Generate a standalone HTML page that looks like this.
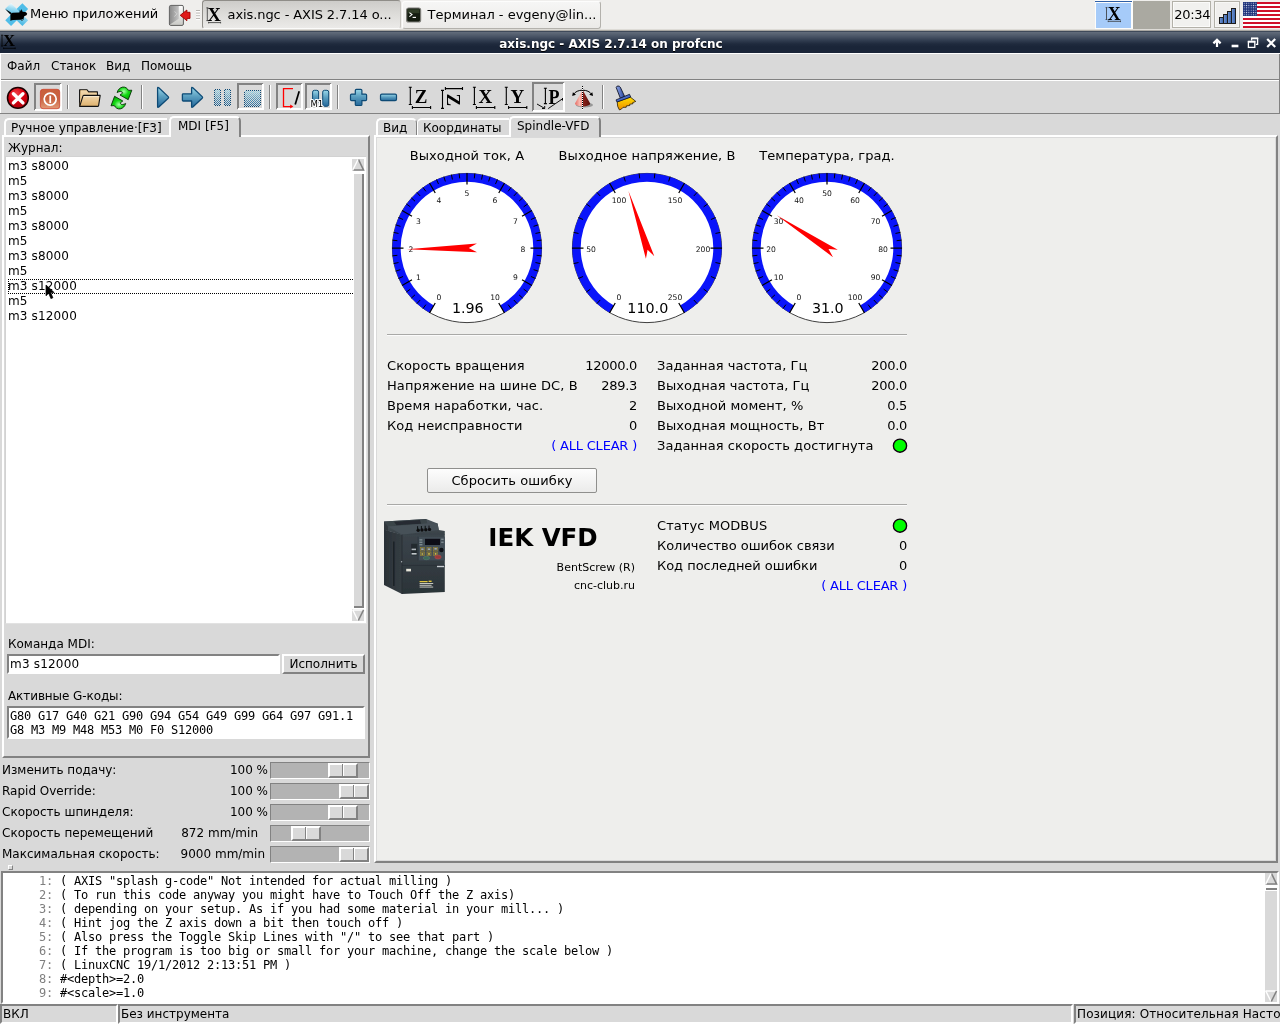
<!DOCTYPE html>
<html lang="ru"><head><meta charset="utf-8"><title>axis.ngc - AXIS 2.7.14 on profcnc</title>
<style>
html,body{margin:0;padding:0;}
body{width:1280px;height:1024px;overflow:hidden;position:relative;background:#d9d9d9;font-family:"DejaVu Sans","Liberation Sans",sans-serif;font-size:12px;color:#000;}
.a{position:absolute;white-space:pre;}
.t12{font-size:12px;line-height:14px;}
.t13{font-size:13px;line-height:16px;}
.mono{font-family:"DejaVu Sans Mono","Liberation Mono",monospace;font-size:12px;letter-spacing:-0.224px;line-height:14px;}
.raised{border-style:solid;border-color:#fff #828282 #828282 #fff;}
.sunken{border-style:solid;border-color:#828282 #fff #fff #828282;}
.r{text-align:right;}
svg{position:absolute;overflow:visible;}
/* xfce panel */
#panel{left:0;top:0;width:1280px;height:30px;background:#efeeec;}
#titlebar{left:0;top:31px;width:1280px;height:22px;background:linear-gradient(#2f3a4b 0px,#606a79 1.5px,#4c5768 5px,#333f52 9px,#1f2a3d 13px,#1a2538 16px,#1a2538 22px);}
#menubar{left:0;top:53px;width:1280px;height:26px;background:#d9d9d9;border-top:1px solid #fff;border-left:1px solid #fff;box-sizing:border-box;}
.ln{color:#7f7f7f;}

#root{position:absolute;left:0;top:0;width:1280px;height:1024px;will-change:transform;}
.num{letter-spacing:-0.3px;}
#rightnb .t13{letter-spacing:0.07px;}
#rightnb .t13.num{letter-spacing:-0.3px;}

</style></head>
<body>
<div id="root">
<div class="a" id="panel">
  <div class="a" style="left:0;top:29px;width:1280px;height:1px;background:#dddbd6"></div>
  <div class="a" style="left:0;top:30px;width:1280px;height:1px;background:#a9a7a2"></div>
  <div class="a t13" style="left:30px;top:6.2px;letter-spacing:-0.08px;">Меню приложений</div>
  <!-- task buttons -->
  <div class="a" style="left:202px;top:0px;width:199px;height:29px;border:1px solid;border-color:#8f8d88 #c9c7c2 #fbfbfa #8f8d88;border-radius:3px;background:linear-gradient(#cdccc9,#dcdbd8 45%,#ebeae8);box-sizing:border-box;"></div>
  <div class="a t13" style="left:227.5px;top:6.5px;letter-spacing:-0.09px;">axis.ngc - AXIS 2.7.14 o...</div>
  <div class="a" style="left:402px;top:1px;width:199px;height:28px;border:1px solid;border-color:#fdfdfc #b3b1ac #b3b1ac #fdfdfc;border-radius:3px;background:linear-gradient(#f6f6f5,#ebeae8);box-sizing:border-box;"></div>
  <div class="a t13" style="left:427.5px;top:6.5px;">Терминал - evgeny@lin...</div>
  <!-- pager -->
  <div class="a" style="left:1095px;top:0px;width:38px;height:29px;background:#fdfdfc;"></div>
  <div class="a" style="left:1095px;top:1px;width:37px;height:1px;background:#2f5fa6;"></div>
  <div class="a" style="left:1096px;top:3px;width:35px;height:25px;background:#a6cbf9;"></div>
  <div class="a" style="left:1133px;top:1px;width:37px;height:28px;background:#aaa9a1;"></div>
  <div class="a" style="left:1172px;top:1px;width:39px;height:27px;border:1px solid #b3b1a9;background:#f1f1ef;box-shadow:inset 0 0 0 1px #fbfbfa;box-sizing:border-box;"></div>
  <div class="a t13" style="left:1174.3px;top:6.5px;letter-spacing:-0.32px;">20:34</div>
  <div class="a" style="left:1214px;top:1px;width:26px;height:27px;border:1px solid #b3b1a9;background:#f0efed;box-shadow:inset 0 0 0 1px #f8f8f6;box-sizing:border-box;"></div>
<svg style="left:0;top:0" width="1280" height="31" viewBox="0 0 1280 31">
<defs>
  <linearGradient id="xg" x1="0" y1="0" x2="1" y2="1"><stop offset="0" stop-color="#f2fbfe"/><stop offset="0.35" stop-color="#9fdcf2"/><stop offset="1" stop-color="#3fb4e2"/></linearGradient>
  <linearGradient id="dg" x1="0" y1="0" x2="1" y2="0"><stop offset="0" stop-color="#8d8d8d"/><stop offset="1" stop-color="#c4c4c4"/></linearGradient>
  <linearGradient id="dg2" x1="0" y1="0" x2="0" y2="1"><stop offset="0" stop-color="#ffffff"/><stop offset="1" stop-color="#c9c9c5"/></linearGradient>
  <linearGradient id="nb" x1="0" y1="0" x2="1" y2="0"><stop offset="0" stop-color="#7498d6"/><stop offset="1" stop-color="#345ea6"/></linearGradient>
  <pattern id="stars" x="1243" y="2" width="2.33" height="2.33" patternUnits="userSpaceOnUse"><rect width="2.4" height="2.4" fill="#1b2f78"/><rect x="0.7" y="0.7" width="1" height="1" fill="#d0d6ea"/></pattern>
</defs>
<!-- xfce logo -->
<g transform="translate(16.7 14.6)">
  <rect x="-12.1" y="-4.1" width="24.2" height="8.2" transform="rotate(45)" fill="url(#xg)"/>
  <rect x="-12.1" y="-4.1" width="24.2" height="8.2" transform="rotate(-45)" fill="#4fbde8"/>
  <rect x="-12.1" y="-4.1" width="12.1" height="8.2" transform="rotate(45)" fill="url(#xg)"/>
</g>
<g fill="#000">
  <path d="M10.4 15.2Q10.2 13 12.6 12.8L19.4 12.4L19.9 9.6L20.9 11.4L21.5 9L22.8 11.9Q26.6 11.6 27.2 13.8Q27.2 15.6 24.2 16.2L23.6 18.4L23.8 19.8L22.6 19.2L20.6 19.8L13.4 19.9L11.6 20.2L10.6 21L10.4 19.4Z"/>
  <path d="M5.2 9.1L11.4 12.8L10.4 14.4Z"/>
  <path d="M21.6 19.4L23 20.8L21.2 20.4Z"/>
</g>
<!-- logout/door icon -->
<rect x="169.4" y="5.4" width="14" height="20" rx="1.4" fill="url(#dg2)" stroke="#5d5d5d" stroke-width="1"/>
<path d="M170 6H178.8V18.8L170 24.6Z" fill="url(#dg)"/>
<path d="M174.6 11.4L177 13.8L174.4 16.6" fill="none" stroke="#d8d8d8" stroke-width="0.8"/>
<path d="M180.2 15.3L186.9 10V12.3H190V18.4H186.9V20.7Z" fill="#e01818" stroke="#a00000" stroke-width="0.9" stroke-linejoin="round"/>
<!-- handle -->
<g><rect x="196" y="10" width="4" height="1" fill="#b5b3ae"/><rect x="196" y="12.7" width="4" height="1" fill="#b5b3ae"/><rect x="196" y="15.4" width="4" height="1" fill="#b5b3ae"/><rect x="196" y="18.1" width="4" height="1" fill="#b5b3ae"/>
<rect x="196" y="11" width="4" height="1" fill="#fff"/><rect x="196" y="13.7" width="4" height="1" fill="#fff"/><rect x="196" y="16.4" width="4" height="1" fill="#fff"/><rect x="196" y="19.1" width="4" height="1" fill="#fff"/></g>
<!-- X icon in task button -->
<g font-family="'Liberation Serif','DejaVu Serif',serif" font-weight="bold" fill="#000">
  <text x="207.6" y="20.9" font-size="18.5">X</text>
  <text x="1107.8" y="19.5" font-size="17.8">X</text>
</g>
<g stroke="#333" stroke-width="0.8" fill="none">
  <path d="M207.3 7.8V20.6M206.4 7.8H208.4M206.4 20.6H208.4"/>
  <path d="M208.6 22.6H220.6M208.6 21.8V23.4M220.6 21.8V23.4"/>
  <path d="M1106.5 7.6V19.5M1105.6 7.6H1107.4M1105.6 19.5H1107.4"/>
  <path d="M1108.2 21.3H1120.5M1108.2 20.5V22.1M1120.5 20.5V22.1"/>
</g>
<!-- terminal icon -->
<rect x="406.6" y="8" width="14" height="14" rx="2" fill="#141c10" stroke="#7d7d78" stroke-width="1.2"/>
<rect x="407.8" y="9.2" width="11.6" height="4" fill="#3a4a30" opacity="0.7"/>
<path d="M409.4 12.6L412 14.6L409.4 16.6" fill="none" stroke="#fff" stroke-width="1.1"/>
<path d="M412.6 17.4H416" stroke="#fff" stroke-width="1.1"/>
<!-- network bars -->
<g stroke="#1c1c1c" stroke-width="1" fill="url(#nb)">
  <rect x="1219.5" y="17.5" width="4" height="6"/>
  <rect x="1223.5" y="14.5" width="4" height="9"/>
  <rect x="1227.5" y="11.5" width="4" height="12"/>
  <rect x="1231.5" y="8.5" width="4" height="15"/>
</g>
<!-- US flag -->
<g>
  <rect x="1243" y="2" width="37" height="26" fill="#fff"/>
  <g fill="#d0102a">
    <rect x="1243" y="2" width="37" height="2"/><rect x="1243" y="6" width="37" height="2"/><rect x="1243" y="10" width="37" height="2"/><rect x="1243" y="14" width="37" height="2"/><rect x="1243" y="18" width="37" height="2"/><rect x="1243" y="22" width="37" height="2"/><rect x="1243" y="26" width="37" height="2"/>
  </g>
  <rect x="1243" y="2" width="14" height="14" fill="url(#stars)"/>
</g>
</svg>

</div>

<div class="a" id="titlebar">
  <div class="a" style="left:0;top:6px;width:1222px;text-align:center;color:#fff;font-weight:bold;font-size:12px;line-height:14px;text-shadow:0 1px 0 #000;">axis.ngc - AXIS 2.7.14 on profcnc</div>
  <svg style="left:0;top:-31px" width="1280" height="56" viewBox="0 0 1280 56">
    <g font-family="'Liberation Serif','DejaVu Serif',serif" font-weight="bold" fill="#000"><text x="3" y="46.1" font-size="16.8">X</text></g>
    <g stroke="#000" stroke-width="0.8" fill="none"><path d="M2 35.2V46.1M1.2 35.2H2.8M1.2 46.1H2.8"/><path d="M3.6 48.3H15.2M3.6 47.5V49.1M15.2 47.5V49.1"/></g>
    <g id="tbb" fill="none" stroke="#fff">
      <path d="M1217 47V40.6M1213.4 43.4L1217 39.8L1220.6 43.4" stroke-width="2.2" stroke-linejoin="miter"/>
      <path d="M1231.6 46H1238.4" stroke-width="2.6"/>
      <path d="M1251.6 40.4V38.6H1257.6V44.4H1255.8" stroke-width="1.3"/><path d="M1251 38.2H1258.2" stroke-width="1.6"/>
      <rect x="1248.4" y="41.8" width="6.4" height="5.6" stroke-width="1.3"/><path d="M1247.8 41.6H1255.4" stroke-width="1.8"/>
      <path d="M1267.2 39L1275.2 47M1275.2 39L1267.2 47" stroke-width="2.2"/>
    </g>
  </svg>
</div>

<div class="a" id="menubar">
  <div class="a t12" style="left:6px;top:5px;">Файл</div>
  <div class="a t12" style="left:50px;top:5px;">Станок</div>
  <div class="a t12" style="left:105px;top:5px;">Вид</div>
  <div class="a t12" style="left:140px;top:5px;">Помощь</div>
  <div class="a" id="mbr" style="left:1278px;top:0;width:1px;height:25px;background:#828282"></div>
</div>

<div class="a" id="toolbar" style="left:0;top:79px;width:1280px;height:35px;">
  <div class="a" style="left:0;top:0;width:1280px;height:1px;background:#828282"></div>
  <div class="a" style="left:0;top:1px;width:1280px;height:1px;background:#fff"></div>
  <div class="a" style="left:0;top:0px;width:1px;height:34px;background:#fff"></div>
  <div class="a" style="left:0;top:34px;width:1280px;height:1px;background:#828282"></div>
  <div class="a" style="left:1279px;top:1px;width:1px;height:34px;background:#828282"></div>
<svg style="left:0;top:-79px" width="1280" height="120" viewBox="0 0 1280 120">
<defs>
  <linearGradient id="gb" x1="0" y1="0" x2="0" y2="1"><stop offset="0" stop-color="#9ad8ea"/><stop offset="0.45" stop-color="#5b9fc0"/><stop offset="1" stop-color="#24679a"/></linearGradient>
  <radialGradient id="gr" cx="0.4" cy="0.3" r="0.75"><stop offset="0" stop-color="#f0444a"/><stop offset="0.5" stop-color="#d8000f"/><stop offset="1" stop-color="#a8000a"/></radialGradient>
  <linearGradient id="gp" x1="0" y1="0" x2="0" y2="1"><stop offset="0" stop-color="#c9603c"/><stop offset="0.5" stop-color="#c8623f"/><stop offset="1" stop-color="#e39a78"/></linearGradient>
  <linearGradient id="gf" x1="0" y1="0" x2="0" y2="1"><stop offset="0" stop-color="#f3d9ae"/><stop offset="1" stop-color="#ddb06c"/></linearGradient>
  <radialGradient id="gg" cx="0.45" cy="0.35" r="0.7"><stop offset="0" stop-color="#a8ffa8"/><stop offset="0.45" stop-color="#14d814"/><stop offset="1" stop-color="#00a400"/></radialGradient>
  <pattern id="stip" width="2" height="2" patternUnits="userSpaceOnUse"><rect x="0" y="0" width="1" height="1" fill="#fff"/><rect x="1" y="1" width="1" height="1" fill="#fff"/></pattern>
  <mask id="mstip"><rect x="200" y="80" width="80" height="40" fill="url(#stip)"/></mask>
  <linearGradient id="gcl" x1="0" y1="0" x2="1" y2="0"><stop offset="0" stop-color="#e86a62"/><stop offset="0.6" stop-color="#f7b9b0"/><stop offset="1" stop-color="#f08a80"/></linearGradient>
  <linearGradient id="gcr" x1="0" y1="0" x2="1" y2="0"><stop offset="0" stop-color="#8e241c"/><stop offset="1" stop-color="#5a0f0a"/></linearGradient>
  <linearGradient id="ghd" x1="0" y1="0" x2="1" y2="0"><stop offset="0" stop-color="#8fa4e4"/><stop offset="1" stop-color="#2746a0"/></linearGradient>
  <linearGradient id="gbr" x1="0" y1="0" x2="0" y2="1"><stop offset="0" stop-color="#ffe000"/><stop offset="1" stop-color="#ee8e00"/></linearGradient>
</defs>
<!-- sunken frames -->
<g fill="none" stroke-width="2">
  <path d="M35 110V84H61" stroke="#828282"/><path d="M35 110H61V84" stroke="#fff"/>
  <path d="M238 109V84H263" stroke="#828282"/><path d="M238 109H263V84" stroke="#fff"/>
  <path d="M277 109V84H302" stroke="#828282"/><path d="M277 109H302V84" stroke="#fff"/>
  <path d="M306 109V84H331" stroke="#828282"/><path d="M306 109H331V84" stroke="#fff"/>
  <path d="M533 111V83H564" stroke="#828282"/><path d="M533 111H564V83" stroke="#fff"/>
</g>
<!-- separators -->
<g>
  <rect x="67" y="85" width="1" height="24" fill="#828282"/><rect x="68" y="85" width="1" height="24" fill="#fff"/>
  <rect x="141" y="85" width="1" height="24" fill="#828282"/><rect x="142" y="85" width="1" height="24" fill="#fff"/>
  <rect x="269" y="85" width="1" height="24" fill="#828282"/><rect x="270" y="85" width="1" height="24" fill="#fff"/>
  <rect x="337" y="85" width="1" height="24" fill="#828282"/><rect x="338" y="85" width="1" height="24" fill="#fff"/>
  <rect x="602" y="85" width="1" height="24" fill="#828282"/><rect x="603" y="85" width="1" height="24" fill="#fff"/>
</g>
<!-- estop -->
<circle cx="17.9" cy="97.9" r="10.4" fill="url(#gr)" stroke="#1a0000" stroke-width="1.5"/>
<path d="M13.4 93.7L22.9 102.9M22.9 93.7L13.4 102.9" stroke="#fff" stroke-width="3.4" stroke-linecap="round"/>
<!-- power -->
<rect x="40.4" y="89.3" width="19.3" height="19.4" rx="2.6" fill="url(#gp)" stroke="#cf3a24" stroke-width="0.7"/>
<circle cx="50.2" cy="99.1" r="6" fill="none" stroke="#fff" stroke-width="1.7"/>
<rect x="49.4" y="95.6" width="1.7" height="7.4" fill="#fff"/>
<!-- folder -->
<path d="M79.6 106.3V89.7H87L88.6 91.9H97.4V95.5" fill="#e6c083" stroke="#111" stroke-width="1.1" stroke-linejoin="round"/>
<path d="M79.6 106.3L81 90.6H86.6L88.2 92.8H96.6V96" fill="url(#gf)"/>
<path d="M79.7 106.4L82.9 96.2Q83.2 95.4 84 95.4H100.2L98.6 105.6Q98.4 106.4 97.6 106.4Z" fill="url(#gf)" stroke="#111" stroke-width="1.1" stroke-linejoin="round"/>
<path d="M83.6 96.6H99" stroke="#f8ecd4" stroke-width="0.9"/>
<!-- refresh -->
<g id="rfa"><path d="M117.2 92.3C117.8 90 119.8 87.6 122.6 87.1C125.4 86.7 127.4 88.4 128.5 90.4L131.8 90.2L128.2 99.7L120 95L122.5 93.2C122.3 92 121.4 91.3 120.2 91.4C119 91.5 118 92.2 117.2 92.6Z" fill="url(#gg)" stroke="#063006" stroke-width="0.9" stroke-linejoin="round"/></g>
<use href="#rfa" transform="rotate(180 121.4 98)"/>
<!-- play -->
<path d="M157.6 88.2Q157.6 86.9 158.8 87.7L168.2 96.6Q169 97.4 168.2 98.2L158.8 107Q157.6 107.9 157.6 106.6Z" fill="url(#gb)" stroke="#0d4a75" stroke-width="1.3" stroke-linejoin="round"/>
<!-- step arrow -->
<path d="M183.2 93.8H191.6V88.2Q191.6 86.8 192.8 87.7L202.2 96.6Q203 97.4 202.2 98.2L192.8 107Q191.6 107.9 191.6 106.6V101H183.2Q182.4 101 182.4 100.2V94.6Q182.4 93.8 183.2 93.8Z" fill="url(#gb)" stroke="#0d4a75" stroke-width="1.3" stroke-linejoin="round"/>
<!-- pause (stippled) + stop (stippled) -->
<g mask="url(#mstip)">
  <g shape-rendering="crispEdges"><rect x="214.5" y="89.5" width="6" height="16" rx="1.5" fill="url(#gb)" stroke="#0d4a75" stroke-width="1"/>
  <rect x="224.5" y="89.5" width="6" height="16" rx="1.5" fill="url(#gb)" stroke="#0d4a75" stroke-width="1"/>
  <rect x="244.5" y="90.5" width="16" height="16" rx="1.5" fill="url(#gb)" stroke="#0d4a75" stroke-width="1"/></g>
</g>
<!-- skip lines -->
<path d="M293 88.6H283.5V106.6H291" fill="none" stroke="#ff0000" stroke-width="1.3"/>
<path d="M290.2 104.4L293.4 106.6L290.2 108.6Z" fill="#ff0000"/>
<path d="M299.2 91.3L295.2 104.6" stroke="#000" stroke-width="1.7"/>
<!-- optional pause M1 -->
<rect x="312.6" y="90.3" width="6" height="13" rx="1.8" fill="url(#gb)" stroke="#0d4a75" stroke-width="1"/>
<rect x="322.7" y="90.3" width="6" height="16" rx="1.8" fill="url(#gb)" stroke="#0d4a75" stroke-width="1"/>
<text x="310.4" y="107.4" font-size="8.6" stroke="#fff" stroke-width="2.2" stroke-linejoin="round" fill="#fff">M1</text>
<text x="310.4" y="107.4" font-size="8.6" fill="#000">M1</text>
<!-- plus / minus -->
<path d="M356.4 89.3H360.8Q361.9 89.3 361.9 90.4V94.1H365.5Q366.6 94.1 366.6 95.2V99.6Q366.6 100.7 365.5 100.7H361.9V104.4Q361.9 105.5 360.8 105.5H356.4Q355.3 105.5 355.3 104.4V100.7H351.6Q350.5 100.7 350.5 99.6V95.2Q350.5 94.1 351.6 94.1H355.3V90.4Q355.3 89.3 356.4 89.3Z" fill="url(#gb)" stroke="#0d4a75" stroke-width="1.2"/>
<rect x="380.5" y="94.1" width="16" height="6.6" rx="1.4" fill="url(#gb)" stroke="#0d4a75" stroke-width="1.2"/>
<!-- view Z -->
<g stroke="#000" stroke-width="1.1" fill="none">
  <path d="M410.3 87.3V104.5M408.8 87.3H411.8M408.8 104.5H411.8"/>
  <path d="M412.4 107.5H430.6M412.4 106V109M430.6 106V109"/>
  <path d="M442.5 90.4V108.4M441 90.4H444M441 108.4H444"/>
  <path d="M445.4 88.6H462.5M445.4 87.1V90.1M462.5 87.1V90.1"/>
  <path d="M474.4 87.3V104.5M472.9 87.3H475.9M472.9 104.5H475.9"/>
  <path d="M476.4 107.5H494.8M476.4 106V109M494.8 106V109"/>
  <path d="M506.3 87.3V104.5M504.8 87.3H507.8M504.8 104.5H507.8"/>
  <path d="M508.6 107.5H526.8M508.6 106V109M526.8 106V109"/>
  <path d="M545.4 88.2V103.6M543.9 88.2H546.9M543.9 103.6H546.9"/>
  <path d="M537 104L544.6 108.4M542 108.5H544.7V106" stroke-width="0.95"/>
  <path d="M548.2 108.6L562.5 98.8M562.5 98V100.6" stroke-width="0.95"/>
</g>
<g font-family="'Liberation Serif','DejaVu Serif',serif" font-weight="bold" font-size="19" fill="#000">
  <text x="414.8" y="102.9">Z</text>
  <text x="0" y="0" transform="translate(447 93.4) rotate(90)" font-size="19" textLength="12.6">Z</text>
  <text x="478.6" y="102.9" font-size="19">X</text>
  <text x="510.5" y="102.9" font-size="19">Y</text>
  <text transform="translate(548.4 103.6) scale(0.86 1)" font-size="21">P</text>
</g>
<!-- cone rotate -->
<path d="M573.4 94.4Q576.4 90.2 582.6 90.2Q588.8 90.2 591.8 94.4" fill="none" stroke="#000" stroke-width="1"/>
<path d="M572.2 96L572.9 92.2L576 94.8Z M593 96L592.3 92.2L589.2 94.8Z" fill="#000"/>
<ellipse cx="584.4" cy="105" rx="8.6" ry="2.4" fill="#000" opacity="0.3"/>
<path d="M582.6 90L575 103.4A7.6 3 0 0 0 582.6 106.4Z" fill="url(#gcl)"/>
<path d="M582.6 90L590.2 103.4A7.6 3 0 0 1 582.6 106.4Z" fill="url(#gcr)"/>
<path d="M582.5 86V110" stroke="#000" stroke-width="1"/>
<path d="M582.5 87V110" stroke="#fff" stroke-width="1" stroke-dasharray="1 1"/>
<!-- broom -->
<path d="M616.2 87.5Q616.5 86 618 86Q619.6 86 620.3 87.2L624.6 96.4L620.5 98.6Z" fill="url(#ghd)" stroke="#0c1226" stroke-width="0.9" stroke-linejoin="round"/>
<path d="M617.2 101.9L630.2 97L635.8 101.4L632.6 102.7L633 103.7L629.6 104.3L629.8 105.5L626.4 105.9L626.2 107.3L623 107.3L621.4 109.1L619.4 109.9L617.7 106.4Z" fill="url(#gbr)" stroke="#2a1c00" stroke-width="0.8" stroke-linejoin="round"/>
<path d="M616 99.9L629.5 94.3L630.7 97.1L617 102Z" fill="#4a6cc6" stroke="#0c1226" stroke-width="0.8" stroke-linejoin="round"/>
</svg>

</div>

<!-- LEFT NOTEBOOK -->
<div class="a" id="leftnb" style="left:0;top:0;">
  <!-- inactive tab -->
  <div class="a" style="left:4px;top:118px;width:163px;height:18px;border-top:2px solid #fff;border-left:2px solid #fff;border-top-left-radius:5px;box-sizing:border-box;"></div>
  <div class="a t12" style="left:11px;top:121px;">Ручное управление·[F3]</div>
  <!-- panel frame -->
  <div class="a" style="left:2px;top:135px;width:368px;height:623px;box-sizing:border-box;border:2px solid;border-color:#fff #828282 #828282 #fff;"></div>
  <!-- active tab -->
  <div class="a" style="left:169px;top:116px;width:72px;height:21px;background:#d9d9d9;border-top:2px solid #fff;border-left:2px solid #fff;border-right:2px solid #828282;border-radius:5px 5px 0 0;box-sizing:border-box;"></div>
  <div class="a t12" style="left:178px;top:119px;">MDI [F5]</div>

  <div class="a t12" style="left:8px;top:141px;">Журнал:</div>
  <!-- listbox -->
  <div class="a" style="left:5px;top:156px;width:362px;height:468px;background:#fff;box-sizing:border-box;border:1px solid;border-color:#d2d2d2 #e2e2e2 #e2e2e2 #d2d2d2;"></div>
  <div class="a t12" id="journal" style="left:8px;top:159px;line-height:15px;letter-spacing:0.15px;">m3 s8000
m5
m3 s8000
m5
m3 s8000
m5
m3 s8000
m5
m3 s12000
m5
m3 s12000</div>
  <svg style="left:8px;top:279px" width="345" height="15" viewBox="0 0 345 15"><path d="M0 0.5H345M0 14.5H345" stroke="#000" stroke-width="1" stroke-dasharray="1 1"/><path d="M0.5 0V15" stroke="#000" stroke-width="1" stroke-dasharray="1 1"/></svg>
  <svg style="left:44px;top:283px" width="14" height="18" viewBox="44 283 14 18"><path d="M46 285V295.8L48.7 293.2L50.9 298.6L52.9 297.8L50.7 292.6H54.2Z" fill="#000" stroke="#000" stroke-width="0.7" stroke-linejoin="round"/></svg>
  <!-- scrollbar -->
  <div class="a" style="left:354px;top:174px;width:8px;height:432px;background:#d9d9d9;border-right:2px solid #828282;border-bottom:2px solid #828282;"></div>
  <svg style="left:352px;top:159px" width="12" height="12" viewBox="0 0 12 12"><rect width="12" height="12" fill="#d9d9d9"/><path d="M6.5 0.5 L11.5 11 L0.5 11" fill="none" stroke="#828282" stroke-width="1.6"/><path d="M6 0.5 L0.5 11.5" stroke="#fff" stroke-width="1.4"/></svg>
  <svg style="left:352px;top:609px" width="12" height="12" viewBox="0 0 12 12"><rect width="12" height="12" fill="#d9d9d9"/><path d="M0.5 1 L11.5 1" stroke="#fff" stroke-width="1.4"/><path d="M0.8 1 L6 11.5" stroke="#fff" stroke-width="1.4"/><path d="M11.5 1 L6.3 11.5" stroke="#828282" stroke-width="1.6"/></svg>

  <div class="a t12" style="left:8px;top:637px;">Команда MDI:</div>
  <div class="a" style="left:7px;top:654px;width:273px;height:20px;background:#fff;box-sizing:border-box;border:2px solid;border-color:#828282 #fff #fff #828282;"></div>
  <div class="a t12" style="left:10px;top:657px;letter-spacing:0.2px;">m3 s12000</div>
  <div class="a" style="left:282px;top:654px;width:83px;height:20px;box-sizing:border-box;border:2px solid;border-color:#fff #828282 #828282 #fff;"></div>
  <div class="a t12" style="left:282px;top:657px;width:83px;text-align:center;">Исполнить</div>
  <div class="a t12" style="left:8px;top:689px;letter-spacing:-0.09px;">Активные G-коды:</div>
  <div class="a" style="left:7px;top:706px;width:358px;height:33px;background:#fff;box-sizing:border-box;border:2px solid;border-color:#828282 #fff #fff #828282;"></div>
  <div class="a mono" style="left:10px;top:709px;">G80 G17 G40 G21 G90 G94 G54 G49 G99 G64 G97 G91.1
G8 M3 M9 M48 M53 M0 F0 S12000</div>

  <!-- sliders -->
  <div class="a t12" style="left:2px;top:763px;">Изменить подачу:</div>
  <div class="a t12 r" style="left:200px;top:763px;width:68px;">100 %</div>
  <div class="a t12" style="left:2px;top:784px;">Rapid Override:</div>
  <div class="a t12 r" style="left:200px;top:784px;width:68px;">100 %</div>
  <div class="a t12" style="left:2px;top:805px;">Скорость шпинделя:</div>
  <div class="a t12 r" style="left:200px;top:805px;width:68px;">100 %</div>
  <div class="a t12" style="left:2px;top:826px;">Скорость перемещений</div>
  <div class="a t12 r" style="left:160px;top:826px;width:98px;">872 mm/min</div>
  <div class="a t12" style="left:2px;top:847px;">Максимальная скорость:</div>
  <div class="a t12 r" style="left:160px;top:847px;width:105px;">9000 mm/min</div>
<div class="a" style="left:270px;top:762px;width:100px;height:17px;background:#b3b3b3;box-sizing:border-box;border:1px solid;border-color:#828282 #fff #fff #828282;"></div>
<div class="a" style="left:328px;top:763px;width:30px;height:15px;background:#d9d9d9;box-sizing:border-box;border:2px solid;border-color:#fff #828282 #828282 #fff;"></div>
<div class="a" style="left:342px;top:764px;width:1px;height:12px;background:#828282;"></div>
<div class="a" style="left:343px;top:764px;width:1px;height:12px;background:#fff;"></div>
<div class="a" style="left:270px;top:783px;width:100px;height:17px;background:#b3b3b3;box-sizing:border-box;border:1px solid;border-color:#828282 #fff #fff #828282;"></div>
<div class="a" style="left:339px;top:784px;width:30px;height:15px;background:#d9d9d9;box-sizing:border-box;border:2px solid;border-color:#fff #828282 #828282 #fff;"></div>
<div class="a" style="left:353px;top:785px;width:1px;height:12px;background:#828282;"></div>
<div class="a" style="left:354px;top:785px;width:1px;height:12px;background:#fff;"></div>
<div class="a" style="left:270px;top:804px;width:100px;height:17px;background:#b3b3b3;box-sizing:border-box;border:1px solid;border-color:#828282 #fff #fff #828282;"></div>
<div class="a" style="left:328px;top:805px;width:30px;height:15px;background:#d9d9d9;box-sizing:border-box;border:2px solid;border-color:#fff #828282 #828282 #fff;"></div>
<div class="a" style="left:342px;top:806px;width:1px;height:12px;background:#828282;"></div>
<div class="a" style="left:343px;top:806px;width:1px;height:12px;background:#fff;"></div>
<div class="a" style="left:270px;top:825px;width:100px;height:17px;background:#b3b3b3;box-sizing:border-box;border:1px solid;border-color:#828282 #fff #fff #828282;"></div>
<div class="a" style="left:291px;top:826px;width:30px;height:15px;background:#d9d9d9;box-sizing:border-box;border:2px solid;border-color:#fff #828282 #828282 #fff;"></div>
<div class="a" style="left:305px;top:827px;width:1px;height:12px;background:#828282;"></div>
<div class="a" style="left:306px;top:827px;width:1px;height:12px;background:#fff;"></div>
<div class="a" style="left:270px;top:846px;width:100px;height:17px;background:#b3b3b3;box-sizing:border-box;border:1px solid;border-color:#828282 #fff #fff #828282;"></div>
<div class="a" style="left:339px;top:847px;width:30px;height:15px;background:#d9d9d9;box-sizing:border-box;border:2px solid;border-color:#fff #828282 #828282 #fff;"></div>
<div class="a" style="left:353px;top:848px;width:1px;height:12px;background:#828282;"></div>
<div class="a" style="left:354px;top:848px;width:1px;height:12px;background:#fff;"></div>
</div>

<!-- RIGHT NOTEBOOK -->
<div class="a" id="rightnb" style="left:0;top:0;">
  <div class="a" style="left:376px;top:118px;width:41px;height:18px;border-top:2px solid #fff;border-left:2px solid #fff;border-right:1px solid #828282;border-top-left-radius:5px;border-top-right-radius:5px;box-sizing:border-box;"></div>
  <div class="a t12" style="left:383px;top:121px;">Вид</div>
  <div class="a" style="left:417px;top:118px;width:92px;height:18px;border-top:2px solid #fff;border-left:1px solid #fff;border-top-left-radius:5px;box-sizing:border-box;"></div>
  <div class="a t12" style="left:423px;top:121px;">Координаты</div>
  <div class="a" style="left:374px;top:135px;width:904px;height:728px;background:#eeeeec;box-sizing:border-box;border:2px solid;border-color:#fff #828282 #828282 #fff;box-shadow:inset 0 0 0 1px #dadada;"></div>
  <div class="a" style="left:509px;top:116px;width:92px;height:21px;background:#d9d9d9;border-top:2px solid #fff;border-left:2px solid #fff;border-right:2px solid #828282;border-radius:5px 5px 0 0;box-sizing:border-box;"></div>
  <div class="a t12" style="left:517px;top:119px;">Spindle-VFD</div>

  <div class="a t13" style="left:386px;top:148px;width:162px;text-align:center;">Выходной ток, А</div>
  <div class="a t13" style="left:547px;top:148px;width:200px;text-align:center;">Выходное напряжение, В</div>
  <div class="a t13" style="left:746px;top:148px;width:162px;text-align:center;">Температура, град.</div>
<svg style="left:0;top:0" width="1280" height="1024" viewBox="0 0 1280 1024">
<circle cx="467" cy="248" r="74.6" fill="#fff" stroke="#2a2a2a" stroke-width="0.9"/>
<path d="M431.75 309.05 A70.5 70.5 0 1 1 502.25 309.05" fill="none" stroke="#0a14fa" stroke-width="8.4"/>
<path d="M422.92 308.68L425.86 304.63M416.82 303.74L420.16 300.02M411.26 298.18L414.98 294.84M406.32 292.08L410.37 289.14M398.48 278.51L403.05 276.47M395.67 271.18L400.43 269.63M393.64 263.59L398.53 262.55M392.41 255.84L397.38 255.32M392.41 240.16L397.38 240.68M393.64 232.41L398.53 233.45M395.67 224.82L400.43 226.37M398.48 217.49L403.05 219.53M406.32 203.92L410.37 206.86M411.26 197.82L414.98 201.16M416.82 192.26L420.16 195.98M422.92 187.32L425.86 191.37M436.49 179.48L438.53 184.05M443.82 176.67L445.37 181.43M451.41 174.64L452.45 179.53M459.16 173.41L459.68 178.38M474.84 173.41L474.32 178.38M482.59 174.64L481.55 179.53M490.18 176.67L488.63 181.43M497.51 179.48L495.47 184.05M511.08 187.32L508.14 191.37M517.18 192.26L513.84 195.98M522.74 197.82L519.02 201.16M527.68 203.92L523.63 206.86M535.52 217.49L530.95 219.53M538.33 224.82L533.57 226.37M540.36 232.41L535.47 233.45M541.59 240.16L536.62 240.68M541.59 255.84L536.62 255.32M540.36 263.59L535.47 262.55M538.33 271.18L533.57 269.63M535.52 278.51L530.95 276.47M527.68 292.08L523.63 289.14M522.74 298.18L519.02 294.84M517.18 303.74L513.84 300.02M511.08 308.68L508.14 304.63" stroke="#000" stroke-width="1" fill="none"/>
<path d="M429.50 312.95L435.25 302.99M402.05 285.50L412.01 279.75M392.00 248.00L403.50 248.00M402.05 210.50L412.01 216.25M429.50 183.05L435.25 193.01M467.00 173.00L467.00 184.50M504.50 183.05L498.75 193.01M531.95 210.50L521.99 216.25M542.00 248.00L530.50 248.00M531.95 285.50L521.99 279.75M504.50 312.95L498.75 302.99" stroke="#000" stroke-width="1.25" fill="none"/>
<text x="439.0" y="300.4" text-anchor="middle" font-size="7.6" fill="#111">0</text>
<text x="418.5" y="279.9" text-anchor="middle" font-size="7.6" fill="#111">1</text>
<text x="411.0" y="251.9" text-anchor="middle" font-size="7.6" fill="#111">2</text>
<text x="418.5" y="223.9" text-anchor="middle" font-size="7.6" fill="#111">3</text>
<text x="439.0" y="203.4" text-anchor="middle" font-size="7.6" fill="#111">4</text>
<text x="467.0" y="195.9" text-anchor="middle" font-size="7.6" fill="#111">5</text>
<text x="495.0" y="203.4" text-anchor="middle" font-size="7.6" fill="#111">6</text>
<text x="515.5" y="223.9" text-anchor="middle" font-size="7.6" fill="#111">7</text>
<text x="523.0" y="251.9" text-anchor="middle" font-size="7.6" fill="#111">8</text>
<text x="515.5" y="279.9" text-anchor="middle" font-size="7.6" fill="#111">9</text>
<text x="495.0" y="300.4" text-anchor="middle" font-size="7.6" fill="#111">10</text>
<path d="M407.01 249.26L476.91 243.39L468.80 247.96L477.09 252.19Z" fill="#ff0000"/>
<text x="467.8" y="313.2" text-anchor="middle" font-size="14.3" fill="#000">1.96</text>
</svg>
<svg style="left:0;top:0" width="1280" height="1024" viewBox="0 0 1280 1024">
<circle cx="647" cy="248" r="74.6" fill="#fff" stroke="#2a2a2a" stroke-width="0.9"/>
<path d="M611.75 309.05 A70.5 70.5 0 1 1 682.25 309.05" fill="none" stroke="#0a14fa" stroke-width="8.4"/>
<path d="M596.82 303.74L600.16 300.02M586.32 292.08L590.37 289.14M578.48 278.51L583.05 276.47M573.64 263.59L578.53 262.55M573.64 232.41L578.53 233.45M578.48 217.49L583.05 219.53M586.32 203.92L590.37 206.86M596.82 192.26L600.16 195.98M623.82 176.67L625.37 181.43M639.16 173.41L639.68 178.38M654.84 173.41L654.32 178.38M670.18 176.67L668.63 181.43M697.18 192.26L693.84 195.98M707.68 203.92L703.63 206.86M715.52 217.49L710.95 219.53M720.36 232.41L715.47 233.45M720.36 263.59L715.47 262.55M715.52 278.51L710.95 276.47M707.68 292.08L703.63 289.14M697.18 303.74L693.84 300.02" stroke="#000" stroke-width="1" fill="none"/>
<path d="M609.50 312.95L615.25 302.99M572.00 248.00L583.50 248.00M609.50 183.05L615.25 193.01M684.50 183.05L678.75 193.01M722.00 248.00L710.50 248.00M684.50 312.95L678.75 302.99" stroke="#000" stroke-width="1.25" fill="none"/>
<text x="619.0" y="300.4" text-anchor="middle" font-size="7.6" fill="#111">0</text>
<text x="591.0" y="251.9" text-anchor="middle" font-size="7.6" fill="#111">50</text>
<text x="619.0" y="203.4" text-anchor="middle" font-size="7.6" fill="#111">100</text>
<text x="675.0" y="203.4" text-anchor="middle" font-size="7.6" fill="#111">150</text>
<text x="703.0" y="251.9" text-anchor="middle" font-size="7.6" fill="#111">200</text>
<text x="675.0" y="300.4" text-anchor="middle" font-size="7.6" fill="#111">250</text>
<path d="M628.46 190.94L654.27 256.15L647.56 249.71L645.91 258.87Z" fill="#ff0000"/>
<text x="647.8" y="313.2" text-anchor="middle" font-size="14.3" fill="#000">110.0</text>
</svg>
<svg style="left:0;top:0" width="1280" height="1024" viewBox="0 0 1280 1024">
<circle cx="827" cy="248" r="74.6" fill="#fff" stroke="#2a2a2a" stroke-width="0.9"/>
<path d="M791.75 309.05 A70.5 70.5 0 1 1 862.25 309.05" fill="none" stroke="#0a14fa" stroke-width="8.4"/>
<path d="M782.92 308.68L785.86 304.63M776.82 303.74L780.16 300.02M771.26 298.18L774.98 294.84M766.32 292.08L770.37 289.14M758.48 278.51L763.05 276.47M755.67 271.18L760.43 269.63M753.64 263.59L758.53 262.55M752.41 255.84L757.38 255.32M752.41 240.16L757.38 240.68M753.64 232.41L758.53 233.45M755.67 224.82L760.43 226.37M758.48 217.49L763.05 219.53M766.32 203.92L770.37 206.86M771.26 197.82L774.98 201.16M776.82 192.26L780.16 195.98M782.92 187.32L785.86 191.37M796.49 179.48L798.53 184.05M803.82 176.67L805.37 181.43M811.41 174.64L812.45 179.53M819.16 173.41L819.68 178.38M834.84 173.41L834.32 178.38M842.59 174.64L841.55 179.53M850.18 176.67L848.63 181.43M857.51 179.48L855.47 184.05M871.08 187.32L868.14 191.37M877.18 192.26L873.84 195.98M882.74 197.82L879.02 201.16M887.68 203.92L883.63 206.86M895.52 217.49L890.95 219.53M898.33 224.82L893.57 226.37M900.36 232.41L895.47 233.45M901.59 240.16L896.62 240.68M901.59 255.84L896.62 255.32M900.36 263.59L895.47 262.55M898.33 271.18L893.57 269.63M895.52 278.51L890.95 276.47M887.68 292.08L883.63 289.14M882.74 298.18L879.02 294.84M877.18 303.74L873.84 300.02M871.08 308.68L868.14 304.63" stroke="#000" stroke-width="1" fill="none"/>
<path d="M789.50 312.95L795.25 302.99M762.05 285.50L772.01 279.75M752.00 248.00L763.50 248.00M762.05 210.50L772.01 216.25M789.50 183.05L795.25 193.01M827.00 173.00L827.00 184.50M864.50 183.05L858.75 193.01M891.95 210.50L881.99 216.25M902.00 248.00L890.50 248.00M891.95 285.50L881.99 279.75M864.50 312.95L858.75 302.99" stroke="#000" stroke-width="1.25" fill="none"/>
<text x="799.0" y="300.4" text-anchor="middle" font-size="7.6" fill="#111">0</text>
<text x="778.5" y="279.9" text-anchor="middle" font-size="7.6" fill="#111">10</text>
<text x="771.0" y="251.9" text-anchor="middle" font-size="7.6" fill="#111">20</text>
<text x="778.5" y="223.9" text-anchor="middle" font-size="7.6" fill="#111">30</text>
<text x="799.0" y="203.4" text-anchor="middle" font-size="7.6" fill="#111">40</text>
<text x="827.0" y="195.9" text-anchor="middle" font-size="7.6" fill="#111">50</text>
<text x="855.0" y="203.4" text-anchor="middle" font-size="7.6" fill="#111">60</text>
<text x="875.5" y="223.9" text-anchor="middle" font-size="7.6" fill="#111">70</text>
<text x="883.0" y="251.9" text-anchor="middle" font-size="7.6" fill="#111">80</text>
<text x="875.5" y="279.9" text-anchor="middle" font-size="7.6" fill="#111">90</text>
<text x="855.0" y="300.4" text-anchor="middle" font-size="7.6" fill="#111">100</text>
<path d="M776.68 215.32L837.78 249.76L828.51 248.98L832.99 257.14Z" fill="#ff0000"/>
<text x="827.8" y="313.2" text-anchor="middle" font-size="14.3" fill="#000">31.0</text>
</svg>
  <div class="a" style="left:387px;top:334px;width:520px;height:1px;background:#a9a9a7"></div>
  <div class="a" style="left:387px;top:335px;width:520px;height:1px;background:#fbfbfb"></div>

  <div class="a t13" style="left:387px;top:358px;">Скорость вращения</div>
  <div class="a t13 r num" style="left:537px;top:358px;width:100px;">12000.0</div>
  <div class="a t13" style="left:387px;top:378px;">Напряжение на шине DC, В</div>
  <div class="a t13 r num" style="left:537px;top:378px;width:100px;">289.3</div>
  <div class="a t13" style="left:387px;top:398px;">Время наработки, час.</div>
  <div class="a t13 r num" style="left:537px;top:398px;width:100px;">2</div>
  <div class="a t13" style="left:387px;top:418px;">Код неисправности</div>
  <div class="a t13 r num" style="left:537px;top:418px;width:100px;">0</div>
  <div class="a t13 r" style="left:497px;top:438px;width:140px;color:#0000ff;letter-spacing:-0.2px;">( ALL CLEAR )</div>

  <div class="a t13" style="left:657px;top:358px;">Заданная частота, Гц</div>
  <div class="a t13 r num" style="left:807px;top:358px;width:100px;">200.0</div>
  <div class="a t13" style="left:657px;top:378px;">Выходная частота, Гц</div>
  <div class="a t13 r num" style="left:807px;top:378px;width:100px;">200.0</div>
  <div class="a t13" style="left:657px;top:398px;">Выходной момент, %</div>
  <div class="a t13 r num" style="left:807px;top:398px;width:100px;">0.5</div>
  <div class="a t13" style="left:657px;top:418px;">Выходная мощность, Вт</div>
  <div class="a t13 r num" style="left:807px;top:418px;width:100px;">0.0</div>
  <div class="a t13" style="left:657px;top:438px;">Заданная скорость достигнута</div>
  <svg style="left:890px;top:436px" width="20" height="20" viewBox="890 436 20 20"><circle cx="900" cy="445.7" r="6.6" fill="#00ff00" stroke="#100010" stroke-width="1.4"/></svg>

  <div class="a" style="left:427px;top:468px;width:170px;height:25px;border:1px solid #8f8f8d;border-radius:2px;background:linear-gradient(#fdfdfd,#ebebea);box-sizing:border-box;"></div>
  <div class="a t13" style="left:427px;top:472.7px;width:170px;text-align:center;">Сбросить ошибку</div>

  <div class="a" style="left:387px;top:504px;width:520px;height:1px;background:#a9a9a7"></div>
  <div class="a" style="left:387px;top:505px;width:520px;height:1px;background:#fbfbfb"></div>
<svg style="left:0;top:0" width="1280" height="1024" viewBox="0 0 1280 1024">
<defs>
  <linearGradient id="vf" x1="0" y1="0" x2="0" y2="1"><stop offset="0" stop-color="#3b444b"/><stop offset="1" stop-color="#2b3338"/></linearGradient>
  <linearGradient id="vs" x1="0" y1="0" x2="1" y2="0"><stop offset="0" stop-color="#2b3237"/><stop offset="1" stop-color="#353d43"/></linearGradient>
  <linearGradient id="vt" x1="0" y1="0" x2="0" y2="1"><stop offset="0" stop-color="#4a545b"/><stop offset="1" stop-color="#384147"/></linearGradient>
  <filter id="vblur" x="-5%" y="-5%" width="110%" height="110%"><feGaussianBlur stdDeviation="0.35"/></filter>
</defs>
<g filter="url(#vblur)">
  <!-- left side -->
  <path d="M384 529.6L402 534.6V594L384 585Z" fill="url(#vs)"/>
  <path d="M393.8 541.5V586" stroke="#1e2428" stroke-width="1.6"/>
  <path d="M389.4 538V583.6" stroke="#30383d" stroke-width="1"/>
  <!-- top cover -->
  <path d="M384 521.6L426.2 519L437.6 523.6L438.8 530L444.8 531V535L402 535L384 529.8Z" fill="url(#vt)"/>
  <path d="M384 521.6L426.2 519L427.4 523.4L388 526.4Z" fill="#3b444a"/>
  <path d="M394 521.7L420 520.1L421 523.7L396.4 525.2Z" fill="#262c31"/>
  <path d="M388 526.4L427.4 523.4L437.6 523.6L438.8 530L402 534.8Z" fill="#475158"/>
  <path d="M384 521.6V529.8L388 531V526.4Z" fill="#30383d"/>
  <!-- knobs -->
  <g fill="#0c0e10"><circle cx="418.2" cy="530.2" r="1.7"/><circle cx="422" cy="530" r="1.7"/><circle cx="425.8" cy="529.7" r="1.7"/><circle cx="429.5" cy="529.4" r="1.7"/></g>
  <g stroke="#0c0e10" stroke-width="1"><path d="M417.6 526.2V529M421.4 526V529M425.2 525.8V528.6M429 525.6V528.4"/></g>
  <!-- front -->
  <path d="M402 534.6H444.8V592L402 594Z" fill="url(#vf)"/>
  <path d="M402 565.4H444.8" stroke="#283035" stroke-width="0.9"/>
  <path d="M402 534.6V594" stroke="#262d32" stroke-width="0.9"/>
  <!-- control panel -->
  <rect x="418.2" y="536.8" width="26.6" height="23.6" fill="#434e57"/>
  <path d="M418.2 536.8V560.4" stroke="#2a3238" stroke-width="0.8"/>
  <rect x="425" y="538.8" width="15" height="6.2" fill="#0e1113"/>
  <g fill="#7d8a90"><rect x="419.4" y="539.2" width="3" height="1.4"/><rect x="419.4" y="541.6" width="3" height="1.4"/><rect x="419.4" y="544" width="3" height="1.4"/><rect x="441.2" y="538.6" width="2.4" height="1.4"/><rect x="441.2" y="541.6" width="2.4" height="1.4"/></g>
  <g fill="#4d555b" stroke="#93802f" stroke-width="0.7">
    <rect x="420.4" y="547.6" width="4" height="3.4"/><rect x="427" y="547.6" width="4" height="3.4"/><rect x="433.6" y="547.6" width="4" height="3.4"/>
    <rect x="420.4" y="552.2" width="4" height="3.4"/><rect x="427" y="552.2" width="4" height="3.4"/><rect x="433.6" y="552.2" width="4" height="3.4"/>
  </g>
  <g fill="#cdb840"><rect x="421.6" y="553.2" width="1.6" height="1.6"/><rect x="428.2" y="553" width="1.6" height="1.8"/><rect x="434.8" y="553" width="1.6" height="1.8"/></g>
  <g fill="#d8dde0"><rect x="421.2" y="548.6" width="2.4" height="1"/><rect x="427.8" y="548.6" width="2.4" height="1"/><rect x="434.4" y="548.4" width="2.4" height="1"/></g>
  <circle cx="441.4" cy="550" r="2.2" fill="#0e1012"/>
  <ellipse cx="426.4" cy="558" rx="3.2" ry="1.7" fill="#3e6a58" stroke="#5a7f70" stroke-width="0.5"/>
  <ellipse cx="438" cy="557" rx="3.2" ry="1.9" fill="#9a3a3a" stroke="#b45050" stroke-width="0.5"/>
  <!-- small connector block -->
  <rect x="411.2" y="543.8" width="6" height="11.6" fill="#22292d"/>
  <rect x="411.6" y="548.6" width="4.4" height="1.6" fill="#aeb6ba"/><rect x="411.6" y="553" width="5" height="1.6" fill="#c4cacd"/>
  <!-- labels -->
  <rect x="406.2" y="568.8" width="4.8" height="2.6" fill="#e8e6da"/>
  <rect x="437" y="565.8" width="7" height="1.4" fill="#c8ced1"/>
  <g fill="#d9d9d0"><rect x="419.6" y="581" width="8" height="1.2" fill="#e2c73e"/><rect x="428.6" y="580.6" width="3" height="1.4" fill="#e2c73e"/><rect x="419.6" y="583" width="13.6" height="0.9"/><rect x="419.6" y="584.8" width="12" height="0.9"/><rect x="419.6" y="586.6" width="13.6" height="0.9"/></g>
  <circle cx="401.6" cy="561.8" r="0.7" fill="#aab1b5"/>
</g>
</svg>

  <div class="a" style="left:460px;top:522px;width:166px;text-align:center;font-weight:bold;font-size:24.5px;line-height:32px;">IEK VFD</div>
  <div class="a r" style="left:485px;top:561px;width:150px;font-size:11px;line-height:14px;">BentScrew (R)</div>
  <div class="a r" style="left:485px;top:579px;width:150px;font-size:11px;line-height:14px;">cnc-club.ru</div>

  <div class="a t13" style="left:657px;top:518px;">Статус MODBUS</div>
  <svg style="left:890px;top:516px" width="20" height="20" viewBox="890 516 20 20"><circle cx="900" cy="525.7" r="6.6" fill="#00ff00" stroke="#100010" stroke-width="1.4"/></svg>
  <div class="a t13" style="left:657px;top:538px;letter-spacing:-0.03px;">Количество ошибок связи</div>
  <div class="a t13 r num" style="left:807px;top:538px;width:100px;">0</div>
  <div class="a t13" style="left:657px;top:558px;letter-spacing:-0.03px;">Код последней ошибки</div>
  <div class="a t13 r num" style="left:807px;top:558px;width:100px;">0</div>
  <div class="a t13 r" style="left:767px;top:578px;width:140px;color:#0000ff;letter-spacing:-0.2px;">( ALL CLEAR )</div>
</div>

<!-- BOTTOM TEXT -->
<div class="a" id="gcode" style="left:0;top:0;">
  <div class="a" style="left:1px;top:871px;width:1278px;height:133px;background:#fff;box-sizing:border-box;border:2px solid;border-color:#828282 #fff #fff #828282;"></div>
  <div class="a mono" id="code" style="left:4px;top:874px;"><span class="ln">     1: </span>( AXIS "splash g-code" Not intended for actual milling )
<span class="ln">     2: </span>( To run this code anyway you might have to Touch Off the Z axis)
<span class="ln">     3: </span>( depending on your setup. As if you had some material in your mill... )
<span class="ln">     4: </span>( Hint jog the Z axis down a bit then touch off )
<span class="ln">     5: </span>( Also press the Toggle Skip Lines with "/" to see that part )
<span class="ln">     6: </span>( If the program is too big or small for your machine, change the scale below )
<span class="ln">     7: </span>( LinuxCNC 19/1/2012 2:13:51 PM )
<span class="ln">     8: </span>#&lt;depth&gt;=2.0
<span class="ln">     9: </span>#&lt;scale&gt;=1.0</div>
  <div class="a" style="left:8px;top:865px;width:5px;height:5px;box-sizing:border-box;border:1px solid;border-color:#fff #828282 #828282 #fff;background:#d9d9d9;"></div>
  <!-- text scrollbar -->
  <div class="a" style="left:1265px;top:873px;width:12px;height:129px;background:#d9d9d9;"></div>
  <svg style="left:1265px;top:873px" width="12" height="12" viewBox="0 0 12 12"><rect width="12" height="12" fill="#d9d9d9"/><path d="M6.5 0.5 L11.5 11 L0.5 11" fill="none" stroke="#828282" stroke-width="1.6"/><path d="M6 0.5 L0.5 11.5" stroke="#fff" stroke-width="1.4"/></svg>
  <div class="a" style="left:1265px;top:885px;width:12px;height:6px;background:#fff;"></div>
  <div class="a" style="left:1266px;top:888px;width:11px;height:2px;background:#828282;"></div>
  <svg style="left:1265px;top:990px" width="12" height="12" viewBox="0 0 12 12"><rect width="12" height="12" fill="#d9d9d9"/><path d="M0.5 1 L11.5 1" stroke="#fff" stroke-width="1.4"/><path d="M0.8 1 L6 11.5" stroke="#fff" stroke-width="1.4"/><path d="M11.5 1 L6.3 11.5" stroke="#828282" stroke-width="1.6"/></svg>
  <!-- status bar -->
  <div class="a" style="left:0px;top:1004px;width:118px;height:20px;box-sizing:border-box;border:2px solid;border-color:#828282 #fff #fff #828282;"></div>
  <div class="a t12" style="left:3px;top:1007px;">ВКЛ</div>
  <div class="a" style="left:118px;top:1004px;width:955px;height:20px;box-sizing:border-box;border:2px solid;border-color:#828282 #fff #fff #828282;"></div>
  <div class="a t12" style="left:121px;top:1007px;">Без инструмента</div>
  <div class="a" style="left:1074px;top:1004px;width:210px;height:20px;box-sizing:border-box;border:2px solid;border-color:#828282 #fff #fff #828282;"></div>
  <div class="a t12" style="left:1077px;top:1007px;letter-spacing:0.12px;">Позиция: Относительная Настоящая</div>
</div>

</div>
</body></html>
